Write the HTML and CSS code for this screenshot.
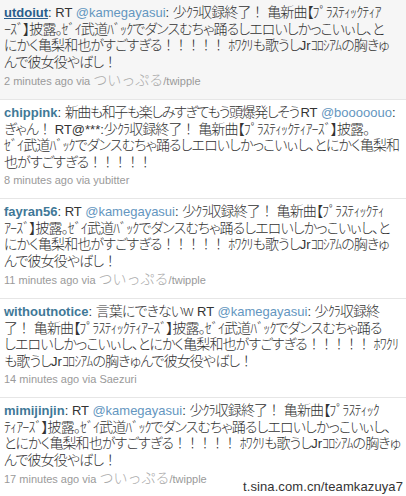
FILE: index.html
```html
<!DOCTYPE html>
<html lang="ja">
<head>
    <meta charset="UTF-8">
    <title>Twitter search</title>
    <link rel="stylesheet" href="styles.css">
</head>
<body>
    <div class="results">
        <div class="tweet hover">
            <p class="msg">
                <span class="ln"><span class="en"><a class="user" href="#">utdoiut</a>: RT <a class="mention" href="#">@kamegayasui</a>: </span>少ｸﾗ収録終了<span class="fw">！</span> 亀新曲【ﾌﾟﾗｽﾃｨｯｸﾃｨｱ</span>
                <span class="ln">ｰｽﾞ】披露。ｾﾞｲ武道ﾊﾞｯｸでダンスむちゃ踊るしエロいしかっこいぃし、と</span>
                <span class="ln">にかく亀梨和也がすごすぎる<span class="fw">！！！！！</span> ﾎﾜｸﾘも歌うし<span class="en">Jr</span>ｺﾛｼｱﾑの胸きゅ</span>
                <span class="ln">んで彼女役やばし<span class="fw">！</span></span>
            </p>
            <p class="meta">2 minutes ago via <span class="src">ついっぷる</span>/twipple</p>
        </div>
        <div class="tweet">
            <p class="msg">
                <span class="ln tight"><span class="en"><a class="user" href="#">chippink</a>: </span>新曲も和子も楽しみすぎてもう頭爆発しそう <span class="en">RT <a class="mention" href="#">@booooouo</a>:</span></span>
                <span class="ln">ぎゃん<span class="fw">！</span> <span class="en">RT@***:</span>少ｸﾗ収録終了<span class="fw">！</span> 亀新曲【ﾌﾟﾗｽﾃｨｯｸﾃｨｱｰｽﾞ】披露。</span>
                <span class="ln">ｾﾞｲ武道ﾊﾞｯｸでダンスむちゃ踊るしエロいしかっこいぃし、とにかく亀梨和</span>
                <span class="ln">也がすごすぎる<span class="fw">！！！！！</span></span>
            </p>
            <p class="meta">8 minutes ago via yubitter</p>
        </div>
        <div class="tweet">
            <p class="msg">
                <span class="ln"><span class="en"><a class="user" href="#">fayran56</a>: RT <a class="mention" href="#">@kamegayasui</a>: </span>少ｸﾗ収録終了<span class="fw">！</span> 亀新曲【ﾌﾟﾗｽﾃｨｯｸﾃｨ</span>
                <span class="ln">ｱｰｽﾞ】披露。ｾﾞｲ武道ﾊﾞｯｸでダンスむちゃ踊るしエロいしかっこいぃし、と</span>
                <span class="ln">にかく亀梨和也がすごすぎる<span class="fw">！！！！！</span> ﾎﾜｸﾘも歌うし<span class="en">Jr</span>ｺﾛｼｱﾑの胸きゅ</span>
                <span class="ln">んで彼女役やばし<span class="fw">！</span></span>
            </p>
            <p class="meta">11 minutes ago via <span class="src">ついっぷる</span>/twipple</p>
        </div>
        <div class="tweet">
            <p class="msg">
                <span class="ln"><span class="en"><a class="user" href="#">withoutnotice</a>: </span>言葉にできないw <span class="en">RT <a class="mention" href="#">@kamegayasui</a>: </span>少ｸﾗ収録終</span>
                <span class="ln">了<span class="fw">！</span> 亀新曲【ﾌﾟﾗｽﾃｨｯｸﾃｨｱｰｽﾞ】披露。ｾﾞｲ武道ﾊﾞｯｸでダンスむちゃ踊る</span>
                <span class="ln">しエロいしかっこいぃし、とにかく亀梨和也がすごすぎる<span class="fw">！！！！！</span> ﾎﾜｸﾘ</span>
                <span class="ln">も歌うし<span class="en">Jr</span>ｺﾛｼｱﾑの胸きゅんで彼女役やばし<span class="fw">！</span></span>
            </p>
            <p class="meta">14 minutes ago via Saezuri</p>
        </div>
        <div class="tweet last">
            <p class="msg">
                <span class="ln"><span class="en"><a class="user" href="#">mimijinjin</a>: RT <a class="mention" href="#">@kamegayasui</a>: </span>少ｸﾗ収録終了<span class="fw">！</span> 亀新曲【ﾌﾟﾗｽﾃｨｯｸ</span>
                <span class="ln">ﾃｨｱｰｽﾞ】披露。ｾﾞｲ武道ﾊﾞｯｸでダンスむちゃ踊るしエロいしかっこいぃし、</span>
                <span class="ln">とにかく亀梨和也がすごすぎる<span class="fw">！！！！！</span> ﾎﾜｸﾘも歌うし<span class="en">Jr</span>ｺﾛｼｱﾑの胸きゅ</span>
                <span class="ln">んで彼女役やばし<span class="fw">！</span></span>
            </p>
            <p class="meta">17 minutes ago via <span class="src">ついっぷる</span>/twipple</p>
            <span class="watermark">t.sina.com.cn/teamkazuya7</span>
        </div>
    </div>
</body>
</html>
```

FILE: styles.css
```css
body {
    margin: 0;
    background: #fff;
    color: #333;
    font-family: "Noto Sans CJK JP", "Liberation Sans", sans-serif;
}

.results {
    width: 406px;
}

.tweet {
    position: relative;
    padding: 3px 0 10px 4px;
    border-bottom: 1px solid #e6e6e6;
}

.tweet.hover {
    background-color: #f6f6f6;
}

.tweet.last {
    border-bottom: none;
}

.msg {
    margin: 0;
    font-size: 14px;
    font-weight: 300;
    font-feature-settings: "palt";
    letter-spacing: -0.9px;
    word-spacing: 2px;
}

.ln {
    display: block;
    height: 16.5px;
    line-height: 16.5px;
    white-space: nowrap;
}

.ln.tight {
    letter-spacing: -1.4px;
    word-spacing: 0;
}

.fw {
    font-feature-settings: normal;
    letter-spacing: -1.5px;
}

.en {
    font-family: "Liberation Sans", Arial, sans-serif;
    font-size: 13px;
    font-weight: normal;
    line-height: 1;
    letter-spacing: 0;
    word-spacing: normal;
}

.user {
    font-weight: bold;
    color: #3f7897;
    text-decoration: none;
}

.hover .user {
    color: #2a5e8c;
    text-decoration: underline;
}

.mention {
    color: #6496c0;
    text-decoration: none;
}

.meta {
    margin: 3px 0 0;
    font-family: "Liberation Sans", Arial, sans-serif;
    font-size: 11px;
    line-height: 16px;
    color: #9a9a9a;
}

.src {
    font-family: "Noto Sans CJK JP", sans-serif;
    font-size: 14px;
    line-height: 1;
    color: #aaa;
    font-weight: 300;
}

.watermark {
    position: absolute;
    right: 3px;
    bottom: 3px;
    font-family: "Liberation Sans", Arial, sans-serif;
    font-size: 13px;
    letter-spacing: 0.1px;
    color: #333;
}
```
